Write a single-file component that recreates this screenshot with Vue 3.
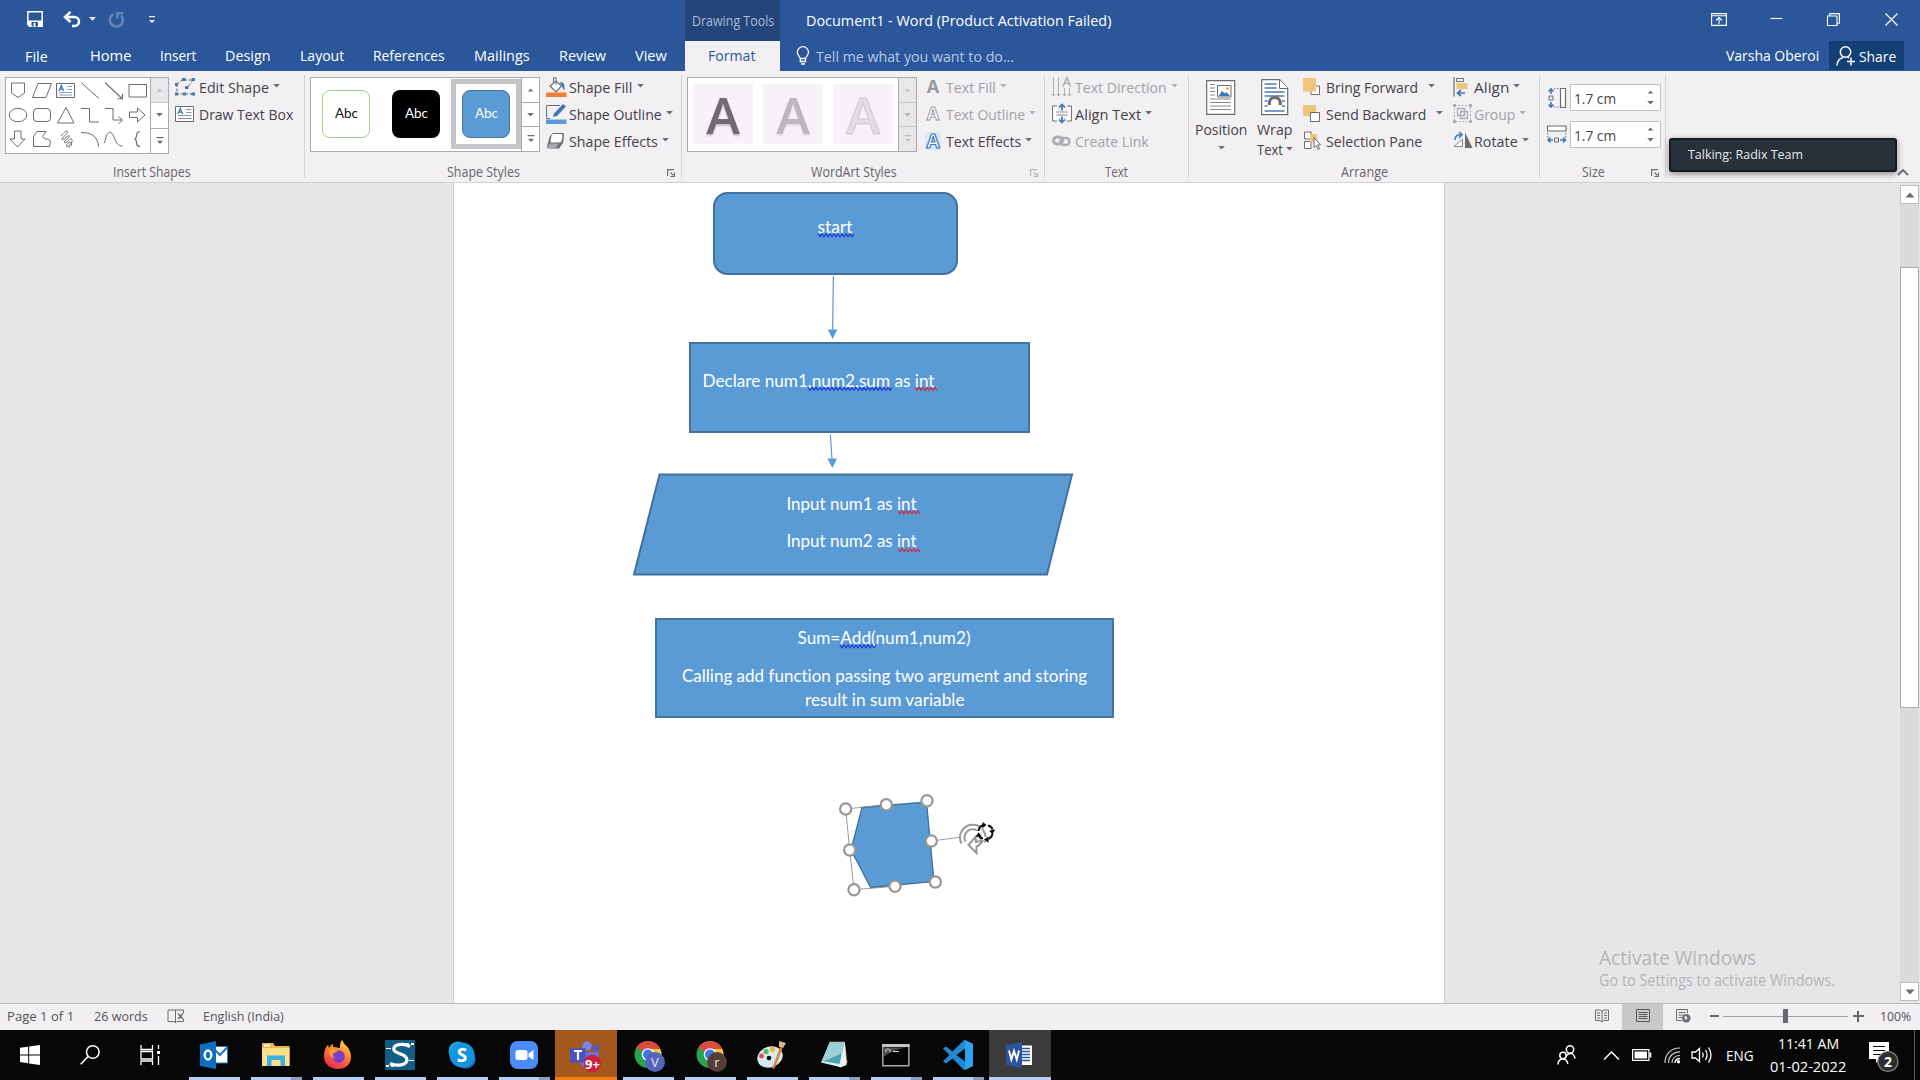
<script setup>
import { h, ref, onMounted } from 'vue'

// Text run squeezed or stretched horizontally to an exact advance width.
const Fit = {
  props: { w: Number, t: String },
  setup(props) {
    const inner = ref(null)
    const k = ref(1)
    onMounted(() => { k.value = props.w / inner.value.offsetWidth })
    return () => h('span', { class: 'fit', style: { width: props.w + 'px' } },
      [h('span', { class: 'fit-in', ref: inner, style: { transform: `scaleX(${k.value})` } }, props.t)])
  }
}

const Ic = {
  props: { n: String },
  setup(props) {
    return () => {
      const [w, hh, body] = icons[props.n]
      return h('svg', { class: 'ic', width: w, height: hh, viewBox: `0 0 ${w} ${hh}`, fill: 'none', innerHTML: body })
    }
  }
}

const G = '#6d6b70'
const B = '#3f78b5'
const L = '#b0aeb2'
const chrome = (c, l) => `<circle cx="14" cy="13.500" r="13.500" fill="#2aa350"/><path d="M14 13.500L2.300 6.800A13.500 13.500 0 0 1 25.700 6.800L26 8H14Z" fill="#dd4b3e"/><path d="M14 8h12.300A13.500 13.500 0 0 1 15 27l5-11z" fill="#f8c63d"/><circle cx="14" cy="13.500" r="6.300" fill="#fff"/><circle cx="14" cy="13.500" r="5" fill="#3c78e6"/><circle cx="21" cy="21" r="10" fill="${c}"/><text x="21" y="25.500" font-size="13" fill="#e6e6f4" text-anchor="middle" font-family="Open Sans,sans-serif">${l}</text>`

const icons = {
  save: [16, 16, `<path d="M.8.800h14.400v14.400H2.500L.8 13.500z" stroke="#fff" stroke-width="1.500"/><path d="M1 9.500h14V15H1z" fill="#fff"/><path d="M4.500 11h6.500v4.500H4.500z" fill="#2b579a"/><path d="M6.500 12h2v3.500h-2z" fill="#fff"/>`],
  undo: [19, 16, `<path d="M2 6h9.500a4.500 4.500 0 0 1 0 9H9" stroke="#fff" stroke-width="2.500"/><path d="M7.500.800L2 6l5.500 5" stroke="#fff" stroke-width="2.500"/>`],
  redo: [17, 17, `<path d="M5.500 3.200A6.500 6.500 0 1 0 13 4.500" stroke="#6484b8" stroke-width="2.600"/><path d="M9.300 8V2.200h6" stroke="#6484b8" stroke-width="2.400"/>`],
  dw: [7, 4, '<path d="M0 0h7L3.500 3.800z" fill="#e6ecf5"/>'],
  custom: [6, 8, '<path d="M0 0h6v1.300H0zM0 4h6L3 7z" fill="#e6ecf5"/>'],
  dd: [7, 4, `<path d="M.2 0h6.600L3.500 3.500z" fill="${G}"/>`],
  ddl: [7, 4, '<path d="M.2 0h6.600L3.500 3.500z" fill="#b4b2b6"/>'],
  up: [7, 4, `<path d="M.7 3.500h5.600L3.500.500z" fill="${G}"/>`],
  upl: [7, 4, '<path d="M.7 3.500h5.600L3.500.500z" fill="#c2c0c4"/>'],
  more: [8, 8, `<path d="M.5 0h7v1.200h-7zM1 3.800h6L4 7z" fill="${G}"/>`],
  morel: [8, 8, '<path d="M.5 0h7v1.200h-7zM1 3.800h6L4 7z" fill="#c2c0c4"/>'],
  bulb: [14, 20, '<path d="M4.300 12.500C4 10.500 1.300 9.500 1.300 6.300a5.600 5.600 0 0 1 11.200 0c0 3.200-2.700 4.200-3 6.200zM4.300 12.500v3h5.200v-3M5 18h4" stroke="#fff" stroke-width="1.300"/>'],
  opts: [16, 13, '<path d="M.6.600h14.800v11.800H.6zM.6 2.700h14.800M8 11V5M5 7.500l3-3 3 3" stroke="#fff" stroke-width="1.100"/>'],
  min: [13, 13, '<path d="M.5 5.500h12" stroke="#fff" stroke-width="1.100"/>'],
  restore: [13, 13, '<path d="M.5 3h9.500v9.500H.5zM2.700 3V.600h9.700v9.600H10" stroke="#fff" stroke-width="1.100"/>'],
  close: [13, 13, '<path d="M.5.500l12 12M12.500.500l-12 12" stroke="#fff" stroke-width="1.200"/>'],
  share: [20, 20, '<circle cx="9.500" cy="6" r="5.200" stroke="#fff" stroke-width="1.500"/><path d="M1 19.500c.3-4.500 2.500-7 6-8M11.500 10.800l1.500 1M11 15.500h8M15 11.500v8" stroke="#fff" stroke-width="1.500"/>'],
  // Insert Shapes gallery
  s0: [24, 24, `<path d="M5.500 5h13v10l-6.500 4.500L5.500 15z" stroke="${G}"/>`],
  s1: [24, 24, `<path d="M8 5.500h13.500L16 19.500H2.500z" stroke="${G}"/>`],
  s2: [24, 24, `<path d="M2.500 5.500h18v14h-18z" fill="#fff" stroke="${G}"/><path d="M13 8.500h5M13 11.500h5M5 14.500h13M5 17h13" stroke="#8aa0b8"/><path d="M5 13l2.300-5.500L9.600 13M6 11.200h2.700" stroke="${B}" stroke-width="1.300"/>`],
  s3: [24, 24, `<path d="M3 4.500l18 16" stroke="${G}"/>`],
  s4: [24, 24, `<path d="M3 4.500l17 16M20.500 16v4.800h-5" stroke="${G}" stroke-width="1.100"/>`],
  s5: [24, 24, `<path d="M3 6.500h17.500v12.500H3z" stroke="${G}"/>`],
  s6: [24, 24, `<ellipse cx="12" cy="12" rx="8.700" ry="6.800" stroke="${G}"/>`],
  s7: [24, 24, `<rect x="3.500" y="5.500" width="17" height="13" rx="3.500" stroke="${G}"/>`],
  s8: [24, 24, `<path d="M12 4.500L20 20H3.500z" stroke="${G}"/>`],
  s9: [24, 24, `<path d="M3 5.500h8.500V19H21" stroke="${G}"/>`],
  s10: [24, 24, `<path d="M3 5.500h8V17h9M16.500 13.500l4 3.700-4 3.500" stroke="${G}"/>`],
  s11: [24, 24, `<path d="M3.500 9h8V5l7.500 7-7.500 7v-4.500h-8z" stroke="${G}"/>`],
  s12: [24, 24, `<path d="M8.500 4h6.500v8h4l-7.500 8L4 12h4.500z" stroke="${G}"/>`],
  s13: [24, 24, `<path d="M3.500 19.500V9.500L7 4.500h9l-3.500 5 3 2.500h2.500l2.500 2-1 5.500z" stroke="${G}"/>`],
  s14: [24, 24, `<path d="M7 9c4-5 6-6 6.500-4S7 11 8 12.500 15 7 15.500 9 9 14 10.500 15.500 17 10 18 12.500s-3 7-5 7 1-5 3.500-4 .5 4-2 5" stroke="${G}"/>`],
  s15: [24, 24, `<path d="M3 5.500c9 0 17 3 17.500 14" stroke="${G}"/>`],
  s16: [24, 24, `<path d="M2.500 16C5 3 9 3 11.500 9s4 10 9 10" stroke="${G}"/>`],
  s17: [24, 24, `<path d="M14 4.500c-6 0-1.500 7-5.500 7.500C12.500 12.500 8 19.500 14 19.500" stroke="${G}" stroke-width="1.200"/>`],
  edit: [20, 18, `<path d="M9 2h8M2 6l5-4M2 6v10h16M18 2l-6 8" stroke="${G}" stroke-dasharray="3 1.500"/><path d="M7 0h3.500v3H7zM16.500 0H20v3h-3.500zM0 5h3v3H0zM10 8h3.500v3H10zM0 14.500h3v3H0zM8 14.500h3v3H8zM16.500 14.500H20v3h-3.500z" fill="${B}"/>`],
  tbox: [20, 16, `<path d="M.5.500h18v15H.5z" fill="#fff" stroke="${G}"/><path d="M11 3.500h5.500M11 6.500h5.500M3 9.500h13.500M3 12.500h13.500" stroke="#8593a6"/><path d="M3 8l2.300-5.500L7.600 8M4 6.200h2.700" stroke="${B}" stroke-width="1.300"/>`],
  sfill: [21, 20, `<path d="M4 9l6-5 5.500 5-5.500 6z" fill="#fff" stroke="${G}" stroke-width="1.200"/><path d="M10 8V.700H7.500V6" stroke="${G}"/><path d="M14 5c5 0 4.500 4 4.500 8-2-.5-1.500-3-3-4.500z" fill="${B}"/><path d="M0 15.500h20.500V20H0z" fill="#f07f2e"/>`],
  sout: [21, 20, `<path d="M14 1.500H.6v13H4" stroke="${G}"/><path d="M7 13l1-3.500L17 0l3 2.500L11 12z" fill="${B}"/><path d="M0 15.500h20.500V20H0z" fill="#5b9bd5"/>`],
  seff: [20, 18, `<path d="M7 1h9.500q2 0 1.500 2l-1 8-4 5.500H3q-2.500 0-2-2.500L4 4z" fill="${G}"/><path d="M7 2h8q2 0 1.500 2l-1 5q-.5 1.500-2 1.500H5.500Q4 10.500 4.500 9l1-5.500Q6 2 7 2z" fill="#fff"/><path d="M1.500 14q-.5 2 1.500 2h7l3-4.500H4z" fill="#aaa8ac"/>`],
  tfill: [14, 16, `<text x="7" y="14" text-anchor="middle" font-family="Open Sans,sans-serif" font-weight="700" font-size="18" fill="#9a989c">A</text>`],
  tout: [14, 16, `<text x="7" y="14" text-anchor="middle" font-family="Open Sans,sans-serif" font-weight="700" font-size="18" fill="#fff" stroke="#9a989c" stroke-width=".9">A</text>`],
  teff: [16, 18, `<rect width="16" height="18" rx="3" fill="#d9e8f8"/><text x="8" y="15.500" text-anchor="middle" font-family="Open Sans,sans-serif" font-weight="700" font-size="19" fill="#fff" stroke="${B}" stroke-width="1.200">A</text>`],
  tdir: [20, 20, `<path d="M1.500 0v19M6.500 0v19M12.500 11v8M17.500 11v8M0 17l1.500 2L3 17M5 17l1.500 2L8 17M11 17l1.500 2 1.500-2M16 17l1.500 2 1.500-2" stroke="${L}"/><path d="M11 9.500L14.800.500l3.800 9M12.500 6.500h5" stroke="${L}" stroke-width="1.600"/>`],
  atext: [20, 20, `<path d="M5 2H.600v15H5M15 2h4.400v15H15" fill="#fff" stroke="${G}"/><path d="M4 8h12M4 11h12" stroke="#9a989c"/><path d="M10 6.500V1M7 3.500L10 .500l3 3M10 12.500V18M7 15.500l3 3 3-3" stroke="${B}" stroke-width="1.700"/>`],
  link: [19, 12, `<rect x="1.500" y="2" width="9" height="7" rx="3.500" stroke="${L}" stroke-width="3"/><rect x="8.500" y="3" width="9" height="7" rx="3.500" stroke="${L}" stroke-width="2.600"/>`],
  pos: [30, 36, `<path d="M.7.700h28v33.600H.7z" fill="#fff" stroke="${G}" stroke-width="1.200"/><path d="M4 4.500h5M4 8h5M4 11.500h5M4 15h5M4 19h21M4 22.500h21M4 26h21M4 29.500h21" stroke="#8a888d"/><path d="M11.500 5.500h13.500V17H11.500z" fill="#fff" stroke="${G}"/><path d="M12.500 16l3.500-5 3 2.500 1.500-1.500 3.500 4z" fill="${B}"/><circle cx="21.500" cy="8.500" r="1.500" fill="#eda45a"/>`],
  wrap: [28, 37, `<path d="M.7.700h18l8 8.500v26.500H.7z" fill="#fff" stroke="${G}" stroke-width="1.200"/><path d="M18.500.700V9.500H27" fill="#fff" stroke="${G}"/><path d="M3.500 5h12M3.500 9h12M3.500 13h20M3.500 17h20M3.500 22h3M21 22h3M3.500 27h3M21 27h3M3.500 32h20" stroke="#4d7ab0" stroke-width="1.300"/><path d="M8.300 26v-2a5.500 5.500 0 0 1 11 0v2" stroke="${G}" stroke-width="3.200"/>`],
  bring: [18, 18, `<path d="M8 8h8.500v8.500H8z" fill="#fff" stroke="${G}"/><path d="M0 0h13v13.500H0z" fill="#edc57b"/>`],
  send: [18, 18, `<path d="M0 0h13v11H0z" fill="#edc57b"/><path d="M7.500 7.500h9v9h-9z" fill="#fff" stroke="${G}"/>`],
  pane: [18, 19, `<path d="M1.500 1h6.500v7H1.500zM1.500 10.500h6.500v7H1.500z" fill="#fff" stroke="${G}"/><path d="M7 3h7v8H7z" fill="#edc57b"/><path d="M11 6.500v10l2.300-2 1.700 4 1.500-.7-1.700-4h2.700z" fill="#fff" stroke="${G}"/>`],
  align: [16, 20, `<path d="M1 0v19.500" stroke="${G}" stroke-width="1.200"/><path d="M3.500 1.500h7v3h-7z" fill="#fff" stroke="${G}"/><path d="M3.500 6h11v6h-11z" fill="#edc57b"/><path d="M12 16H5M8 13l-3.500 3L8 19" stroke="${B}" stroke-width="1.700"/>`],
  group: [19, 19, `<path d="M1.500 1.500h16v16h-16z" stroke="${L}" stroke-dasharray="2 1.500"/><path d="M4.500 4.500h7v7h-7zM7.500 7.500h7v7h-7z" stroke="${L}" stroke-width="1.400"/><path d="M0 0h3v3H0zM16 0h3v3h-3zM0 16h3v3H0zM16 16h3v3h-3z" fill="${L}"/>`],
  rotate: [20, 17, `<path d="M1 14.500h8.500V7z" fill="#fff" stroke="#8a888d"/><path d="M12 .500v15.500h7.500z" fill="${G}"/><path d="M2 8c0-4 2-5.500 6-5.500M6 0l3 2.500L6 6" stroke="${B}" stroke-width="1.500"/>`],
  hgt: [20, 20, `<path d="M13.500.500h5v19h-5z" fill="#fff" stroke="${G}" stroke-width="1.200"/><path d="M7 .700h6M7 19h6" stroke="${G}" stroke-dasharray="1.500 1.500"/><path d="M2 8h4v4H2z" stroke="${G}"/><path d="M4 6V1M1.500 3.500L4 1l2.500 2.500M4 14v5M1.500 16.500L4 19l2.500-2.500" stroke="${B}" stroke-width="1.600"/>`],
  wid: [20, 20, `<path d="M.5 1h18.500v5H.5z" fill="#fff" stroke="${G}" stroke-width="1.200"/><path d="M.7 8v6M18.700 8v6" stroke="${G}" stroke-dasharray="1.500 1.500"/><path d="M7.500 13h4v4h-4z" stroke="${G}"/><path d="M6 15H1M3.500 12.500L1 15l2.500 2.500M13 15h5.500M16 12.500l2.500 2.500-2.500 2.500" stroke="${B}" stroke-width="1.600"/>`],
  launch: [9, 9, `<path d="M.6 7V.600H7M3.500 3.500l3 3M7.500 3.500v4h-4" stroke="${G}" stroke-width="1.100"/>`],
  launchl: [9, 9, `<path d="M.6 7V.600H7M3.500 3.500l3 3M7.500 3.500v4h-4" stroke="#b9b7bb" stroke-width="1.100"/>`],
  caret: [12, 8, `<path d="M1 7l5-5 5 5" stroke="${G}" stroke-width="1.800"/>`],
  sbu: [10, 6, `<path d="M.5 5.500h9L5 .500z" fill="${G}"/>`],
  sbd: [10, 6, `<path d="M.5.500h9L5 5.500z" fill="${G}"/>`],
  proof: [18, 16, `<path d="M8.500 2H1v11.500h6.500l1 1.500zM8.500 2v13M8.500 2h8v3M16.500 11v2.500H9.500" stroke="${G}"/><path d="M11 5.500l5 5.500M16 5.500L11 11" stroke="${G}" stroke-width="1.500"/>`],
  vread: [14, 14, `<path d="M.5 1h5L7 2.500 8.500 1h5v10.500h-5L7 13l-1.500-1.500h-5zM7 2v11M2 4h3M2 6.500h3M2 9h3M9 4h3M9 6.500h3M9 9h3" stroke="${G}"/>`],
  vprint: [14, 14, '<path d="M.5.500h13v12H.5zM2.500 3.500h9M2.500 5.500h9M2.500 7.500h9M2.500 9.500h9" stroke="#5a585c"/>'],
  vweb: [15, 14, `<path d="M11.500 4V.500H.500v11H6M2.500 3.500h7M2.500 6h5M2.500 8.500h3.500" stroke="${G}"/><circle cx="10.300" cy="9.300" r="4.200" fill="${G}"/><path d="M8 8l2-1 1.500 2-1.500 2z" fill="#fff"/>`],
  // Taskbar
  win: [20, 20, '<path d="M0 2.800L8.200 1.700v7.700H0zM9.200 1.500L20 0v9.400H9.200zM0 10.400h8.200v7.800L0 17zM9.200 10.400H20V20L9.200 18.400z" fill="#fff"/>'],
  find: [20, 20, '<circle cx="12.800" cy="7" r="6.300" stroke="#fff" stroke-width="1.500"/><path d="M8 11.500L.700 19.300" stroke="#fff" stroke-width="1.600"/>'],
  tv: [21, 20, '<path d="M1 0v4.500h11.500V0M1 20v-4h11.500v4M1 6.500h11.500v7.500H1zM18.500 0v4M18.500 11v9" stroke="#fff" stroke-width="1.300"/><path d="M17 6h3v3h-3z" fill="#fff"/>'],
  outlook: [28, 28, '<path d="M14 5.500h13.500v16.500H14z" fill="#fff" stroke="#1b74c5"/><path d="M14 8l6 6 7.500-8" stroke="#1b74c5" stroke-width="2"/><path d="M0 3.500L16 0v28L0 25z" fill="#0f6fc0"/><ellipse cx="8" cy="14" rx="3.300" ry="4.500" stroke="#fff" stroke-width="2.300"/>'],
  folder: [28, 24, '<path d="M0 0h11l2 3h14.500v20H0z" fill="#e9b64b"/><path d="M2 1.500h6v2H2z" fill="#fff"/><path d="M0 5h27.500v18H0z" fill="#fbe08c"/><path d="M5 23V12.500h18V23h-4.500v-6h-9v6z" fill="#41ace0"/>'],
  ff: [28, 30, '<defs><linearGradient id="ffg" x1="0.800" y1="0" x2="0.300" y2="1"><stop offset="0" stop-color="#ffe14a"/><stop offset=".4" stop-color="#ff8b25"/><stop offset="1" stop-color="#ee2457"/></linearGradient></defs><path d="M18 0c2 3 2 4 5 6.500 7 8 5.500 22-9 22.500C4 29 0 22 0 16 0 11 2 6 4 5l1 3c1-2 2-3 4-4v3c3-.5 5 1 7 1 0-3 0-6 2-8z" fill="url(#ffg)"/><circle cx="14.500" cy="16.500" r="6.300" fill="#7a3fd0"/><path d="M5 10c4-2 6 0 9 1-2 2-4 1-5 3s1 4 3 4c-4 1-7-2-7-8z" fill="#ff9a2d"/>'],
  ssms: [30, 30, '<path d="M0 0h30v30H0z" fill="#0f5f86"/><path d="M25 6.500C18 2.500 7 4.500 9 10c1.500 4 13 4 13 9.500 0 6-10 7-17 4" stroke="#fff" stroke-width="3.200"/><path d="M21 3h3v2h-3zM26 3h3v2h-3zM1 25h3v2H1zM6 25h3v2H6zM1 8h5v1H1zM24 20h5v1h-5z" fill="#fff"/>'],
  skype: [28, 28, '<circle cx="10" cy="10" r="9.500" fill="#19a6ea"/><circle cx="18" cy="18" r="9.500" fill="#1377cd"/><circle cx="14" cy="14" r="12.500" fill="#1496df"/><text x="14" y="21" font-family="Open Sans,sans-serif" font-weight="700" font-size="19" fill="#fff" text-anchor="middle">S</text>'],
  zoom: [28, 28, '<rect width="28" height="28" rx="7.500" fill="#4a8cf8"/><rect x="5.500" y="9" width="12" height="10" rx="2.500" fill="#fff"/><path d="M18.500 12.500L23.500 9v10l-5-3.500z" fill="#fff"/>'],
  teams: [34, 28, '<circle cx="18" cy="5" r="4.700" fill="#7b83eb"/><circle cx="27" cy="7" r="3.300" fill="#5059c9"/><path d="M12 11h18v10q-2 6-8 5-8 2-11-4z" fill="#6a70dc"/><path d="M1 7h15.500v14.500H1z" fill="#4a52bd"/><path d="M5 10h8M9 10v9" stroke="#fff" stroke-width="2.200"/><circle cx="23.500" cy="22.500" r="8.700" fill="#cc1f3d"/><text x="23.500" y="27.500" font-family="Open Sans,sans-serif" font-weight="700" font-size="13" fill="#fff" text-anchor="middle">9+</text>'],
  ch1: [28, 28, chrome('#5464bd', 'V')],
  ch2: [28, 28, chrome('#573d38', 'r')],
  paint: [30, 28, '<ellipse cx="13" cy="16" rx="13" ry="10.300" transform="rotate(-20 13 16)" fill="#d3e7f5"/><circle cx="12" cy="17" r="2.300" fill="#0a0a0a"/><circle cx="4.500" cy="15" r="2.400" fill="#dd4a3c"/><circle cx="9" cy="10.500" r="2.600" fill="#5db848"/><circle cx="15.500" cy="8.500" r="2.500" fill="#efb72e"/><path d="M15 27.500l8-21 2.500 1-8 20z" fill="#d98431"/><path d="M22 0l7 2-3 5-4-1z" fill="#dcb58a"/>'],
  note: [28, 26, '<path d="M25 2l2.500 19-5 3z" fill="#b5a15f"/><path d="M23 2h2l1.500 21-6 2.500-3-2z" fill="#eef1f2"/><path d="M9.500.5H25L20 25 1 20.500z" fill="#d9eef2"/><path d="M10 1.500h14L19.500 22 2 19z" fill="#4aa3b2"/><path d="M10 1.500h14l-2.500 10L7 18l-5 1z" fill="#9cd0d8"/><path d="M9.500.500H25" stroke="#b9c3c6" stroke-width="1.500"/>'],
  cmd: [28, 23, '<path d="M.8.800h26v21H.8z" fill="#050505" stroke="#a7a7a7" stroke-width="1.500"/><path d="M0 0h27.500v3H0z" fill="#c6c6c6"/><path d="M2 3.500h23q-14 2-23 9z" fill="#4d4d4d"/><path d="M4 5v3M8 5v3M5 5h2M11 7.500h6" stroke="#ddd"/>'],
  vsc: [30, 30, '<path d="M21 0l9 4v22l-9 4L9.500 18.500 3 23.500 0 21.500 6.500 15 0 8.500 3 6.500 9.500 11.500z" fill="#1f8ad2"/><path d="M22 8.500v13L13.500 15z" fill="#0a0a0a"/><path d="M22 0l8 4v22l-8 4z" fill="#2ba3ee"/>'],
  word: [28, 26, '<path d="M14 3.500h12v19.500H14z" fill="#fff"/><path d="M16 6.500h8M16 9.500h8M16 12.500h8M16 15.500h8M16 18.500h8" stroke="#2b579a" stroke-width="1.400"/><path d="M0 3L16 0v26L0 23z" fill="#2a5599"/><path d="M3 8.500l2.300 9L8 9l2.700 8.500 2.300-9" stroke="#fff" stroke-width="1.900"/>'],
  ppl: [19, 20, '<circle cx="13" cy="4.500" r="3.700" stroke="#fff" stroke-width="1.500"/><circle cx="6" cy="10.500" r="3.200" stroke="#fff" stroke-width="1.500"/><path d="M.8 19.500c.5-4 2.500-5.500 5-5.500s4.500 1.500 5 5M9 11c1.500-2 3-2.500 4.500-2.500s4 1.500 4.500 5" stroke="#fff" stroke-width="1.500"/>'],
  tchev: [17, 9, '<path d="M1 8.500L8.500 1l7.500 7.500" stroke="#fff" stroke-width="1.500"/>'],
  bat: [20, 12, '<path d="M.6.600h16.300v10.800H.6z" stroke="#fff" stroke-width="1.200"/><path d="M2.500 2.500h12.500v7H2.500z" fill="#fff"/><path d="M17.500 3.500h1.800v5h-1.800z" fill="#fff"/>'],
  wifi: [17, 17, '<path d="M1 16C1 7 7 1 16 1M4.500 16C4.500 9.500 9 4.800 16 4.800M8 16c0-4.500 3-7.500 8-7.500" stroke="#cfcfcf" stroke-width="1.200"/><path d="M11 16c0-3 2-4.500 5-4.500" stroke="#fff" stroke-width="1.400"/><circle cx="14.500" cy="14.800" r="1.700" fill="#fff"/>'],
  vol: [22, 18, '<path d="M1 6h3.500L8.500 2.500v13L4.500 12H1z" stroke="#fff" stroke-width="1.300"/><path d="M11.500 6.500q1.500 2.500 0 5M14.500 4q3.200 5 0 10M17.500 1.500q5 7.500 0 15" stroke="#fff" stroke-width="1.300"/>'],
  act: [32, 32, '<path d="M1 1h20v17h-9l-4 4v-4H1z" fill="#fff"/><path d="M5 5.500h12M5 9.500h12M5 13.500h8" stroke="#0a0a0a" stroke-width="1.200"/><circle cx="20" cy="20.500" r="10" fill="#2e2e2e" stroke="#8a8a8a" stroke-width="1.200"/><text x="20" y="25.500" font-family="Open Sans,sans-serif" font-weight="700" font-size="14" fill="#fff" text-anchor="middle">2</text>']
}

const tabs = [['Home', 90, 41], ['Insert', 160, 36], ['Design', 225, 46], ['Layout', 300, 44], ['References', 373, 72], ['Mailings', 474, 56], ['Review', 559, 47], ['View', 635, 32]]
  .map(([t, x, w], i, a) => ({ t, w, gap: i ? x - a[i - 1][1] - a[i - 1][2] : 42 }))

const edit = [{ i: 'edit', t: 'Edit Shape', w: 70, d: 4 }, { i: 'tbox', t: 'Draw Text Box', w: 94 }]
const shape = [{ i: 'sfill', t: 'Shape Fill', w: 63, d: 5 }, { i: 'sout', t: 'Shape Outline', w: 93, d: 4 }, { i: 'seff', t: 'Shape Effects', w: 89, d: 4 }]
const text = [{ i: 'tfill', t: 'Text Fill', w: 50, d: 4, off: 1 }, { i: 'tout', t: 'Text Outline', w: 79, d: 4, off: 1 }, { i: 'teff', t: 'Text Effects', w: 75, d: 4 }]
const dirs = [{ i: 'tdir', t: 'Text Direction', w: 92, d: 4, off: 1 }, { i: 'atext', t: 'Align Text', w: 66, d: 4 }, { i: 'link', t: 'Create Link', w: 74, off: 1 }]
const order = [{ i: 'bring', t: 'Bring Forward', w: 92, d: 10 }, { i: 'send', t: 'Send Backward', w: 100, d: 10 }, { i: 'pane', t: 'Selection Pane', w: 96 }]
const arr = [{ i: 'align', t: 'Align', w: 35, d: 4 }, { i: 'group', t: 'Group', w: 41, d: 4, off: 1 }, { i: 'rotate', t: 'Rotate', w: 44, d: 4 }]
const Cmds = {
  props: { list: Array, iw: Number },
  setup(p) {
    return () => h('div', { class: 'cmds' }, p.list.map(c =>
      h('div', { class: ['cmd', c.off && 'off'] }, [
        h('span', { class: 'cic', style: { width: p.iw + 'px' } }, [h(Ic, { n: c.i })]),
        h(Fit, { t: c.t, w: c.w }),
        c.d ? h('span', { style: { marginLeft: c.d + 'px' }, class: 'cdd' }, [h(Ic, { n: c.off ? 'ddl' : 'dd' })]) : null
      ])))
  }
}

const apps = [
  { i: 'outlook' }, { i: 'folder', m: 1 }, { i: 'ff' }, { i: 'ssms' }, { i: 'skype' }, { i: 'zoom', m: 1 }, { i: 'teams', k: 'alert' },
  { i: 'ch1' }, { i: 'ch2' }, { i: 'paint' }, { i: 'note', m: 1 }, { i: 'cmd', m: 1 }, { i: 'vsc', m: 1 }, { i: 'word', k: 'cur' }
]

const lines = [
  ['start', 817.5, 232.5, 35], ['Declare num1,num2,sum as int', 702.5, 386.5, 232],
  ['Input num1 as int', 786.5, 509.5, 130], ['Input num2 as int', 786.5, 547, 130],
  ['Sum=Add(num1,num2)', 797.5, 643.5, 173], ['Calling add function passing two argument and storing', 682, 681.5, 405],
  ['result in sum variable', 805, 705.5, 159.5]
]
const wave = (x, y, n) => { let d = `M${x} ${y}`; for (let i = 0; i < n; i++) d += `l2 ${i % 2 ? -2.8 : 2.8}`; return d }
const waves = [
  [wave(818, 234, 18), '#1a35d8'], [wave(808, 387.5, 42), '#1a35d8'], [wave(915, 387.5, 11), '#d3263c'],
  [wave(898, 511, 11), '#d3263c'], [wave(898, 549, 11), '#d3263c'], [wave(840, 645, 18), '#1a35d8']
]
const handles = [[845.7, 809], [886.3, 804.7], [927, 800.7], [931.3, 841], [935.3, 882], [895, 886.3], [854, 889.7], [849.7, 850]]
</script>

<template>
  <div class="app">
    <header class="top">
      <div class="titlebar">
        <div class="qat"><Ic n="save" /><Ic n="undo" class="u" /><Ic n="dw" class="d" /><Ic n="redo" class="r" /><Ic n="custom" class="c" /></div>
        <div class="ctx"><Fit t="Drawing Tools" :w="82" /></div>
        <div class="title"><Fit t="Document1 - Word (Product Activation Failed)" :w="305" /></div>
        <div class="winbtns"><Ic n="opts" /><Ic n="min" /><Ic n="restore" /><Ic n="close" /></div>
      </div>
      <div class="tabs">
        <div class="file"><Fit t="File" :w="23" /></div>
        <span v-for="t in tabs" :key="t.t" class="tab" :style="{ marginLeft: t.gap + 'px' }"><Fit :t="t.t" :w="t.w" /></span>
        <div class="active"><Fit t="Format" :w="47" /></div>
        <div class="tell"><Ic n="bulb" /><Fit t="Tell me what you want to do..." :w="198" /></div>
        <div class="user"><Fit t="Varsha Oberoi" :w="93" /></div>
        <div class="share"><Ic n="share" /><Fit t="Share" :w="37" /></div>
      </div>
    </header>

    <section class="ribbon">
      <div class="group g1">
        <div class="body">
          <div class="gal gshapes">
            <div class="cells"><Ic v-for="n in 18" :key="n" :n="'s' + (n - 1)" /></div>
            <div class="scr"><i class="dis"><Ic n="upl" /></i><i><Ic n="dd" /></i><i><Ic n="more" /></i></div>
          </div>
          <Cmds :list="edit" :iw="24" />
        </div>
        <div class="glabel"><Fit t="Insert Shapes" :w="78" /></div>
      </div>
      <div class="group g2">
        <div class="body">
          <div class="gal gstyles">
            <div class="styles">
              <div class="st"><b class="white"><Fit t="Abc" :w="23" /></b></div>
              <div class="st"><b class="black"><Fit t="Abc" :w="23" /></b></div>
              <div class="st sel"><b class="blue"><Fit t="Abc" :w="23" /></b></div>
            </div>
            <div class="scr"><i><Ic n="up" /></i><i><Ic n="dd" /></i><i><Ic n="more" /></i></div>
          </div>
          <Cmds :list="shape" :iw="23" />
        </div>
        <div class="glabel l"><Fit t="Shape Styles" :w="73" /><Ic n="launch" class="la" /></div>
      </div>
      <div class="group g3">
        <div class="body">
          <div class="gal gstyles gw">
            <div class="arts"><b class="a1">A</b><b class="a2">A</b><b class="a3">A</b></div>
            <div class="scr"><i class="dis"><Ic n="upl" /></i><i class="dis"><Ic n="ddl" /></i><i class="dis"><Ic n="morel" /></i></div>
          </div>
          <Cmds :list="text" :iw="22" class="ctext" />
        </div>
        <div class="glabel l"><Fit t="WordArt Styles" :w="86" /><Ic n="launchl" class="la" /></div>
      </div>
      <div class="group g4">
        <div class="body"><Cmds :list="dirs" :iw="23" /></div>
        <div class="glabel"><Fit t="Text" :w="23" /></div>
      </div>
      <div class="group g5">
        <div class="body">
          <div class="big bpos"><Ic n="pos" /><div class="bt"><Fit t="Position" :w="52" /></div><div class="bt"><Ic n="dd" /></div></div>
          <div class="big bwrap"><Ic n="wrap" /><div class="bt"><Fit t="Wrap" :w="36" /></div><div class="bt"><Fit t="Text" :w="26" /><Ic n="dd" /></div></div>
          <Cmds :list="order" :iw="23" class="cord" />
          <Cmds :list="arr" :iw="21" class="carr" />
        </div>
        <div class="glabel"><Fit t="Arrange" :w="47" /></div>
      </div>
      <div class="group g6">
        <div class="body sizes">
          <div class="sz"><Ic n="hgt" /><div class="inp"><Fit t="1.7 cm" :w="42" /><span><Ic n="up" /><Ic n="dd" /></span></div></div>
          <div class="sz"><Ic n="wid" /><div class="inp"><Fit t="1.7 cm" :w="42" /><span><Ic n="up" /><Ic n="dd" /></span></div></div>
        </div>
        <div class="glabel l"><Fit t="Size" :w="23" /><Ic n="launch" class="la" /></div>
      </div>
      <Ic n="caret" class="collapse" />
    </section>

    <main class="work">
      <div class="gutter"></div>
      <div class="page"></div>
      <div class="right">
        <div class="mark"><div class="m1"><Fit t="Activate Windows" :w="157" /></div><div class="m2"><Fit t="Go to Settings to activate Windows." :w="236" /></div></div>
      </div>
      <div class="sb">
        <div class="sbb"><Ic n="sbu" /></div>
        <div class="track"><div class="thumb"></div></div>
        <div class="sbb"><Ic n="sbd" /></div>
      </div>
      <svg class="canvas" width="1440" height="820" viewBox="0 183 1440 820" fill="none">
        <g fill="#5b9bd5" stroke="#41719c" stroke-width="2">
          <rect x="714" y="193" width="243" height="81" rx="13.500" />
          <rect x="690" y="343" width="339" height="89" />
          <path d="M659.500 474.500H1072L1047 574.500H634Z" />
          <rect x="656" y="619" width="457" height="98" />
          <path d="M862 807.500L926.500 802L934 881.500L870.700 887.500L851 850Z" stroke-width="1.300" />
        </g>
        <path d="M833.400 276L832.600 331M830.400 434.500L832 460" stroke="#5b9bd5" stroke-width="1.200" />
        <path d="M827.800 329.500h9.600l-4.800 9.500zM827.300 458.500h9.800l-4.700 9.500z" fill="#5b9bd5" />
        <g class="doc"><text v-for="l in lines" :key="l[0]" :x="l[1]" :y="l[2]" :textLength="l[3]" lengthAdjust="spacingAndGlyphs">{{ l[0] }}</text></g>
        <path v-for="(w, i) in waves" :key="i" :d="w[0]" :stroke="w[1]" stroke-width="1.200" />
        <path d="M886 804.700L845.700 809L849.700 850L854 889.700L895 886.300M931.300 841L962 837" stroke="#8e8e8e" stroke-width=".9" />
        <circle v-for="(p, i) in handles" :key="'h' + i" :cx="p[0]" :cy="p[1]" r="5.600" fill="#fff" stroke="#979797" stroke-width="2.200" />
        <path d="M963.500 842.500A10.500 10.500 0 1 1 982.500 841.500" stroke="#979797" stroke-width="6.500" />
        <path d="M963.500 842.500A10.500 10.500 0 1 1 982.500 841.500" stroke="#fff" stroke-width="2.600" />
        <path d="M968.500 845L975.500 837L976 842Q980 841 982.500 841Q980 845.500 976.500 846.500L976.500 853Z" fill="#fff" stroke="#979797" stroke-width="2" />
        <circle cx="985.500" cy="832" r="6.800" stroke="#fff" stroke-width="3.500" />
        <g stroke="#0c0c0c" stroke-width="2">
          <path d="M978.500 831q.500-4.500 5-6M988 825.500q4 1 4.500 4M992.500 833.500q-.5 4-4 5.500M983 838.500q-3.500-.5-4.500-3" />
        </g>
        <path d="M982.500 821.800l4 3.200-4 3.200zM989.200 830.800l6.200-1.500-3 5zM988.500 836.500l-4.500 3 4.500 3.300zM975.500 836.800l3.200-4.500 3 4.500z" fill="#0c0c0c" />
      </svg>
      <div class="talk"><Fit t="Talking: Radix Team" :w="115" /></div>
    </main>

    <footer class="status">
      <Fit t="Page 1 of 1" :w="67" /><Fit t="26 words" :w="54" class="s2" /><Ic n="proof" class="s3" /><Fit t="English (India)" :w="80.500" class="s4" />
      <div class="views">
        <span><Ic n="vread" /></span><span class="on"><Ic n="vprint" /></span><span><Ic n="vweb" /></span>
      </div>
      <div class="zoom"><i class="mi"></i><div class="line"><i></i></div><i class="pl"></i></div>
      <Fit t="100%" :w="31" class="pct" />
    </footer>

    <nav class="bar">
      <div class="sys"><Ic n="win" /></div><div class="sys"><Ic n="find" /></div><div class="sys"><Ic n="tv" /></div>
      <div class="apps">
        <div v-for="a in apps" :key="a.i" class="app-b" :class="[a.k, { multi: a.m }]"><Ic :n="a.i" /><u></u></div>
      </div>
      <div class="tray">
        <Ic n="ppl" /><Ic n="tchev" class="t2" /><Ic n="bat" class="t3" /><Ic n="wifi" class="t4" /><Ic n="vol" class="t5" />
        <Fit t="ENG" :w="28" class="t6" />
        <div class="clock"><Fit t="11:41 AM" :w="61" /><Fit t="01-02-2022" :w="76" /></div>
        <Ic n="act" class="t7" />
        <div class="peek"></div>
      </div>
    </nav>
  </div>
</template>

<style>
body { margin: 0; overflow: hidden; }
.fit { display: inline-block; white-space: pre; flex: none; }
.fit-in { display: inline-block; transform-origin: 0 50%; }
.ic { display: block; flex: none; overflow: visible; }
.cmds { display: flex; flex-direction: column; margin-top: 2px; }
.cmd { height: 27px; display: flex; align-items: center; }
.cmd.off { color: #a3a1a5; }
.cdd { margin-top: -2px; }
.cic { flex: none; }
.ctext .cic { padding-left: 2px; box-sizing: border-box; }
.ctext .cmd:last-child .cic { padding-left: 1px; }
</style>

<style scoped>
.app { width: 1920px; height: 1080px; display: flex; flex-direction: column; font: 15px/20px "Open Sans", "Noto Sans", sans-serif; color: #444246; overflow: hidden; }
.top { background: #2b579a; height: 71px; flex: none; color: #fff; }
.titlebar { height: 41px; display: flex; }
.qat { width: 685px; display: flex; align-items: center; box-sizing: border-box; padding: 0 0 3px 27px; }
.qat .u { margin-left: 20px; }
.qat .d { margin-left: 7px; }
.qat .r { margin-left: 12px; }
.qat .c { margin: 2px 0 0 24px; }
.ctx { width: 95px; background: #24457b; color: #a6b9d8; display: flex; align-items: center; justify-content: center; padding-bottom: 1px; box-sizing: border-box; }
.title { margin-left: 26px; padding-top: 10px; flex: 1; }
.winbtns { display: flex; gap: 44.500px; margin: 13px 22.500px 0 0; }
.winbtns .ic:first-child { margin-right: -2px; }
.tabs { height: 30px; display: flex; line-height: 28px; }
.file { padding: 1px 0 0 25px; }
.active { width: 95px; margin-left: 18px; background: #f2f0f3; color: #2b579a; text-align: center; padding-right: 2px; box-sizing: border-box; }
.tell { display: flex; align-items: center; gap: 6px; margin-left: 16px; color: #b5c8e6; flex: 1; height: 29px; }
.user { margin-right: 10px; }
.share { width: 75px; height: 29px; background: #143f75; margin-right: 16px; display: flex; align-items: center; padding-left: 7px; box-sizing: border-box; gap: 3px; }

.ribbon { height: 111px; flex: none; background: #f2f0f3; border-bottom: 1px solid #d2d0d3; display: flex; }
.group { margin: 4px 0; height: 103px; border-right: 1px solid #d5d3d6; box-sizing: border-box; display: flex; flex-direction: column; }
.body { display: flex; height: 87px; margin-top: -4px; flex: none; box-sizing: border-box; }
.g1 { width: 305px; }
.g2 { width: 377px; }
.g3 { width: 363px; }
.g4 { width: 144px; }
.g5 { width: 351px; }
.g6 { width: 126px; }
.glabel { text-align: center; color: #68666a; font-size: 14px; line-height: 20px; height: 20px; margin-top: 4px; position: relative; }
.glabel.l { padding-right: 19px; }
.la { position: absolute; right: 5px; top: 7px; }
.gal { display: flex; border: 1px solid #acaaae; background: #fff; box-sizing: border-box; margin: 6px 0 0 5px; }
.gshapes { width: 164px; height: 77px; margin-right: 6px; }
.gstyles { width: 230px; height: 75px; margin-right: 6px; }
.cells { width: 146px; display: grid; grid-template-columns: repeat(6, 24px); grid-auto-rows: 24.500px; }
.styles, .arts { width: 211px; display: flex; }
.scr { width: 17px; border-left: 1px solid #acaaae; display: flex; flex-direction: column; }
.scr i { flex: 1; display: flex; align-items: center; justify-content: center; border-bottom: 1px solid #acaaae; }
.scr i:last-child { border-bottom: 0; }
.scr .dis { background: #e9e7ea; border-color: #c9c7ca; }
.st { width: 70px; height: 70px; margin-top: 1px; box-sizing: border-box; display: flex; align-items: center; justify-content: center; }
.st.sel { border: 5px solid #c6c4c8; }
.st b { width: 48px; height: 48px; box-sizing: border-box; border-radius: 8px; display: flex; align-items: center; justify-content: center; font: 14px/20px Lato, sans-serif; padding-bottom: 3px; }
.white { border: 1.500px solid #a3cc8c; color: #111; }
.black { background: #000; color: #fff; }
.blue { background: #5b9bd5; border: 1.500px solid #4a7199; color: #fff; }
.arts b { width: 60px; height: 60px; margin: 6px 5px 0; background: #f7f2f8; font: 600 51px/60px "Open Sans", sans-serif; text-align: center; }
.a1 { color: #6f6b70; text-shadow: 0 2px 2px #c5c0c6; }
.a2 { color: #bcb6bd; text-shadow: 0 2px 2px #ddd; }
.a3 { color: #e2dce3; -webkit-text-stroke: 1px #cfc9d0; }
.gw { margin-right: 7px; }
.g4 .cmds { margin-left: 7px; }
.big { display: flex; flex-direction: column; align-items: center; }
.bt { height: 20px; display: flex; align-items: center; justify-content: center; gap: 3px; }
.bpos { margin-left: 6px; width: 52px; padding-top: 9px; }
.bpos .bt:nth-child(2) { margin-top: 3px; }
.bpos .bt:nth-child(3) { height: 18px; }
.bwrap { margin-left: 10px; width: 36px; padding-top: 8px; }
.bwrap .bt:nth-child(2) { margin-top: 3px; }
.cord { margin-left: 10px; width: 149px; }
.carr { margin-left: 1px; }
.sizes { flex-direction: column; padding: 13px 0 0 7px; gap: 10px; }
.sz { display: flex; gap: 3px; align-items: center; }
.inp { width: 91px; height: 27px; box-sizing: border-box; border: 1px solid #c3c1c5; background: #fff; display: flex; align-items: center; justify-content: space-between; padding: 0 6px 0 3px; }
.inp span:last-child { display: flex; flex-direction: column; gap: 7px; }
.collapse { margin: 97px 0 0 231px; }

.work { position: relative; height: 820px; flex: none; background: #e6e6e8; display: flex; }
.gutter { width: 453px; }
.page { width: 990px; background: #fff; border: 1px solid #cfcdd1; border-width: 0 1px; }
.right { flex: 1; display: flex; align-items: flex-end; }
.mark { margin: 0 0 12px 153.500px; color: #b5b4b6; }
.m1 { font-size: 20px; line-height: 25px; }
.m2 { font-size: 15.500px; line-height: 21px; }
.sb { width: 19px; margin: 2px 1px 2px 0; display: flex; flex-direction: column; background: #dcdadd; }
.sbb { height: 19px; box-sizing: border-box; border: 1px solid #bebcc0; background: #fff; display: flex; align-items: center; justify-content: center; }
.track { flex: 1; padding-top: 63px; }
.thumb { height: 441px; box-sizing: border-box; border: 1px solid #acaaae; background: #fff; }
.canvas { position: absolute; left: 0; top: 0; }
.doc { font: 16.500px Lato, Carlito, sans-serif; fill: #fff; font-variant-ligatures: none; }
.talk { position: absolute; left: 1669px; top: -45px; width: 228px; height: 34px; box-sizing: border-box; background: #27313a; border: 2px solid #161b20; border-radius: 3px; color: #e6e8ea; font-size: 13px; line-height: 29px; padding-left: 17px; box-shadow: 0 2px 6px rgba(0, 0, 0, .45); }

.status { height: 27px; flex: none; box-sizing: border-box; background: #f1eff2; border-top: 1px solid #bcbabe; display: flex; align-items: center; font-size: 13.500px; padding-left: 7px; color: #555357; }
.status .fit { margin-top: -2px; }
.status .s2 { margin-left: 20px; }
.s3 { margin: -3px 0 0 19px; }
.status .s4 { margin-left: 18px; }
.views { margin-left: auto; display: flex; height: 26px; }
.views span { width: 41px; display: flex; align-items: center; justify-content: center; padding-bottom: 3px; box-sizing: border-box; }
.views .on { background: #c9c7ca; padding-bottom: 2px; }
.zoom { display: flex; align-items: center; margin: -2px 16px 0 6px; }
.mi { width: 9px; height: 2px; background: #666; }
.line { width: 125px; height: 1px; background: #a3a1a5; margin: 0 5px 0 4px; display: flex; align-items: center; justify-content: center; }
.line i { width: 5px; height: 14px; background: #6a686c; flex: none; }
.pl { width: 11px; height: 11px; background: linear-gradient(#666, #666) center / 11px 2.400px no-repeat, linear-gradient(#666, #666) center / 2.400px 11px no-repeat; }
.pct { margin-right: 9px; }

.bar { height: 50px; background: #070707; display: flex; color: #fff; }
.sys { width: 60px; display: flex; align-items: center; justify-content: center; }
.apps { display: flex; margin-left: 3px; }
.app-b { width: 62px; position: relative; display: flex; align-items: center; justify-content: center; }
.app-b u { position: absolute; left: 6px; right: 5px; bottom: 0; height: 3px; background: #b7cdf6; }
.multi u { border-right: 11px solid #8c9dbd; box-sizing: border-box; }
.alert { background: #a5581d; }
.alert u { background: #f77c0f; left: 0; right: 0; }
.cur { background: #3b3b3b; }
.cur u { left: 0; right: 0; }
.tray { margin-left: auto; display: flex; align-items: center; font-size: 15px; }
.t2 { margin-left: 27px; }
.t3 { margin-left: 12px; }
.t4 { margin-left: 12px; }
.t5 { margin-left: 10px; }
.t6 { margin-left: 13px; }
.clock { width: 76px; margin: -1px 0 0 16px; display: flex; flex-direction: column; align-items: center; line-height: 23px; }
.t7 { margin: 4px 0 0 22px; }
.peek { width: 5px; height: 50px; margin-left: 14px; border-left: 1px solid #5a5a5a; }
</style>
